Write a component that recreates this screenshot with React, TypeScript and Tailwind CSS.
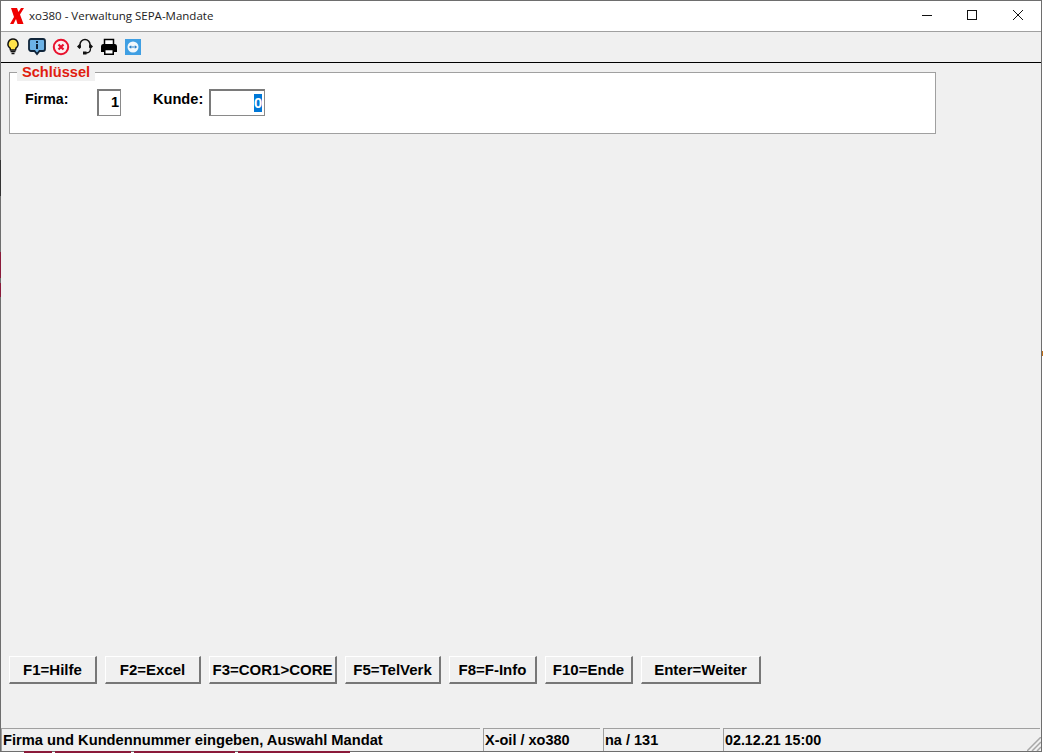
import React from "react";

const buttons = [
  { label: "F1=Hilfe", width: "w-[88px]" },
  { label: "F2=Excel", width: "w-[96px]" },
  { label: "F3=COR1>CORE", width: "w-[128px]" },
  { label: "F5=TelVerk", width: "w-[96px]" },
  { label: "F8=F-Info", width: "w-[88px]" },
  { label: "F10=Ende", width: "w-[88px]" },
  { label: "Enter=Weiter", width: "w-[120px]" },
];

const statusCells = [
  { text: "Firma und Kundennummer eingeben, Auswahl Mandat", width: "w-[479px] text-[14.7px]" },
  { text: "X-oil / xo380", width: "w-[117px] text-[14.5px]" },
  { text: "na / 131", width: "w-[117px] text-[14.5px]" },
  { text: "02.12.21 15:00", width: "flex-1 text-[14.3px]" },
];

const LogoX = () => (
  <svg width="14" height="16" viewBox="0 0 14 16">
    <path d="M1 0h6l1.500 4L11 0h3l-4 6.500L13.500 16h-6L6 11l-2.500 5H0l4-7z" fill="#f00000" />
  </svg>
);

const BulbIcon = () => (
  <svg width="14" height="17" viewBox="0 0 14 17">
    <path d="M7 1a5 5 0 0 0-3 9l.5 2h5l.5-2a5 5 0 0 0-3-9z" fill="#ffe24a" stroke="#111" strokeWidth="1.500" />
    <path d="M4.500 13.500h5M5.500 15.500h3" stroke="#111" strokeWidth="1.500" />
  </svg>
);

const InfoIcon = () => (
  <svg width="18" height="18" viewBox="0 0 18 18">
    <path d="M3 1h12a2 2 0 0 1 2 2v8a2 2 0 0 1-2 2h-3.500L9 16l-2.500-3H3a2 2 0 0 1-2-2V3a2 2 0 0 1 2-2z" fill="#6cb2e6" stroke="#10253a" strokeWidth="1.800" />
    <rect x="8" y="3" width="2" height="2" fill="#10253a" />
    <rect x="8" y="6" width="2" height="5" fill="#10253a" />
  </svg>
);

const StopIcon = () => (
  <svg width="18" height="18" viewBox="0 0 18 18">
    <circle cx="9" cy="9" r="7.200" fill="#fbeef0" stroke="#e8112d" strokeWidth="2" />
    <path d="M6.500 6.500l5 5M11.500 6.500l-5 5" stroke="#e8112d" strokeWidth="2.200" />
  </svg>
);

const HeadsetIcon = () => (
  <svg width="18" height="18" viewBox="0 0 18 18" fill="none">
    <path d="M4 7.500V6.500a5 5 0 0 1 10 0v1" stroke="#111" strokeWidth="1.500" />
    <path d="M3.500 6L1 8.500 3.500 11 5 9.500V7.500zM14.500 6L17 8.500 14.500 11 13 9.500V7.500z" fill="#111" />
    <path d="M14.500 10.500c0 3-2 4.500-4.500 4.500" stroke="#111" strokeWidth="1.300" />
    <rect x="7" y="13.500" width="3.500" height="3" fill="#111" />
  </svg>
);

const PrinterIcon = () => (
  <svg width="18" height="18" viewBox="0 0 18 18">
    <path d="M4.500 7V1.500h9V7" fill="#fff" stroke="#000" strokeWidth="1.500" />
    <path d="M3 6h12a2.500 2.500 0 0 1 2 2.500V14h-3v-2H4v2H1V8.500A2.500 2.500 0 0 1 3 6z" fill="#000" />
    <path d="M4.750 11.500h8.500v4.750h-8.500z" fill="#fff" stroke="#000" strokeWidth="1.500" />
  </svg>
);

const RemoteIcon = () => (
  <svg width="16" height="16" viewBox="0 0 16 16">
    <rect width="16" height="16" fill="#3f9fe3" />
    <circle cx="8" cy="8" r="5.500" fill="#f2f8fc" />
    <path d="M3.800 8l2.400-1.800v3.600zM12.200 8L9.800 6.200v3.600zM6 7.400h4v1.200H6z" fill="#2a80c8" />
  </svg>
);

const ResizeGrip = () => (
  <svg width="14" height="14" viewBox="0 0 14 14" fill="none" stroke="#a8a8a8" strokeWidth="1.500">
    <path d="M0 14L14 0M5 14l9-9M10 14l4-4" />
  </svg>
);

const toolbarIcons = [BulbIcon, InfoIcon, StopIcon, HeadsetIcon, PrinterIcon, RemoteIcon];

const App = () => {
  return (
    <div className="relative h-[753px] w-[1043px] overflow-hidden bg-white font-['Liberation_Sans',Arial,sans-serif] text-black">
      <div className="flex h-[752px] w-[1042px] flex-col border border-[#6e6e6e] bg-[#f0f0f0]">
        <div className="flex h-[30px] items-center bg-white pl-[9px]">
          <LogoX />
          <span className="ml-[5px] font-['Open_Sans',sans-serif] text-[11.5px] text-[#222]">xo380 - Verwaltung SEPA-Mandate</span>
          <div className="ml-auto flex items-center">
            <svg width="45" height="30" viewBox="0 0 45 30"><path d="M16 14.500h10" stroke="#111" /></svg>
            <svg width="45" height="30" viewBox="0 0 45 30"><rect x="16.500" y="9.500" width="9" height="9" fill="none" stroke="#111" /></svg>
            <svg width="45" height="30" viewBox="0 0 45 30"><path d="M17 9l10 10M27 9L17 19" stroke="#111" /></svg>
          </div>
        </div>
        <div className="flex h-[31px] items-center border-t border-[#a0a0a0] pb-px">
          {toolbarIcons.map((Icon, index) => (
            <div key={index} className="flex w-[24px] justify-center">
              <Icon />
            </div>
          ))}
        </div>
        <div className="flex flex-1 flex-col border-t border-black">
          <fieldset className="ml-2 h-[71px] w-[927px] rounded-none border border-[#a0a0a0] bg-white px-[15px]">
            <legend className="ml-[-8px] bg-[#f0f0f0] px-[5px] text-[14.6px] leading-[18px] font-bold text-[#e0200f]">Schlüssel</legend>
            <div className="mt-[8px] flex items-start text-[14.6px] font-bold">
              <span className="w-[72px] text-[14.2px] leading-5">Firma:</span>
              <div className="flex h-[27px] w-[24px] items-center justify-end border-t-2 border-l-2 border-r border-b border-t-[#7a7a7a] border-l-[#7a7a7a] border-r-[#8a8a8a] border-b-[#8a8a8a] bg-white pr-px">1</div>
              <span className="ml-[32px] w-[56px] leading-5">Kunde:</span>
              <div className="flex h-[27px] w-[56px] items-center justify-end border-t-2 border-l-2 border-r border-b border-t-[#7a7a7a] border-l-[#7a7a7a] border-r-[#8a8a8a] border-b-[#8a8a8a] bg-white pr-[2px]">
                <span className="bg-[#0078d7] leading-[18px] text-white">0</span>
              </div>
            </div>
          </fieldset>
          <div className="mt-auto mb-[44px] ml-2 flex gap-2">
            {buttons.map((button) => (
              <div
                key={button.label}
                className={`flex h-[28px] items-center justify-center border-t border-l border-t-white border-l-white border-r-2 border-b-2 border-r-[#777] border-b-[#777] pt-px text-[15px] font-bold ${button.width}`}
              >
                {button.label}
              </div>
            ))}
          </div>
          <div className="flex h-[23px] gap-[3px] pr-px">
            {statusCells.map((cell) => (
              <div key={cell.text} className={`flex items-center border-t border-l border-[#a0a0a0] pl-px leading-none font-bold ${cell.width}`}>
                {cell.text}
              </div>
            ))}
          </div>
        </div>
      </div>
      {/* resize grip, and what shows of the windows behind */}
      <div className="absolute top-[737px] left-[1027px]">
        <ResizeGrip />
      </div>
      <div className="absolute top-[751px] left-[24px] flex h-[2px] gap-[3px]">
        <div className="w-[28px] bg-[#8b1a3a]" />
        <div className="w-[76px] bg-[#8b1a3a]" />
        <div className="w-[101px] bg-[#8b1a3a]" />
        <div className="w-[112px] bg-[#8b1a3a]" />
      </div>
      <div className="absolute top-[160px] left-0 h-[36px] w-px bg-[#333]" />
      <div className="absolute top-[252px] left-0 h-[26px] w-px bg-[#8b1a3a]" />
      <div className="absolute top-[283px] left-0 h-[14px] w-px bg-[#8b1a3a]" />
      <div className="absolute top-[351px] left-[1042px] h-[5px] w-px bg-[#c0701a]" />
    </div>
  );
};

export default App;
